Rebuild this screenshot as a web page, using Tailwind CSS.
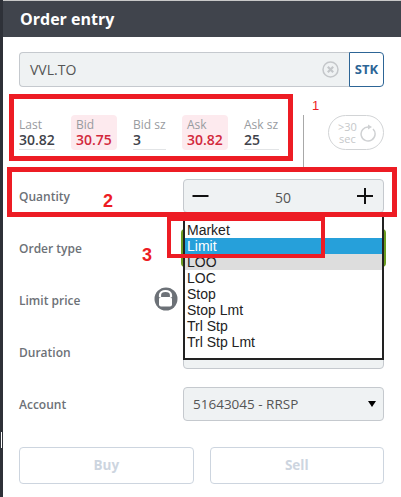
<!DOCTYPE html>
<html lang="en">
<head>
<meta charset="UTF-8">
<title>Order entry</title>
<script src="https://cdn.jsdelivr.net/npm/@tailwindcss/browser@4"></script>
</head>
<body class="bg-white font-['Open_Sans',sans-serif]">
<div class="relative w-[401px] h-[497px] overflow-hidden flex bg-white">
  <!-- left edge of the window behind -->
  <div class="relative w-[3px] shrink-0 bg-[#2e3138]">
    <div class="absolute left-[1px] top-[432px] w-[1px] h-[16px] bg-white"></div>
  </div>

  <div class="flex-1 flex flex-col">
    <div class="h-[1px] bg-[#c8c8c8]"></div>
    <div class="h-[36px] bg-[#40444c] pl-[17px] flex items-center">
      <h1 class="text-[16px] font-bold text-white">Order entry</h1>
    </div>

    <div class="pl-[16px] pr-[17px]">
      <!-- symbol -->
      <div class="flex h-[35px] mt-[15px]">
        <div class="flex-1 flex items-center justify-between bg-[#eff2f3] border border-[#c5c9ce] border-r-0 rounded-l-[4px] pl-[10px] pr-[10px]">
          <span class="text-[14px] text-[#555]">VVL.TO</span>
          <svg width="17" height="17" viewBox="0 0 17 17">
            <circle cx="8.5" cy="8.5" r="7.5" fill="none" stroke="#c4c7ca" stroke-width="1.5"/>
            <path d="M5.8 5.8l5.4 5.4M11.2 5.8l-5.4 5.4" stroke="#c4c7ca" stroke-width="2.2"/>
          </svg>
        </div>
        <div class="w-[35px] flex items-center justify-center border border-[#2d6596] rounded-r-[4px] text-[13px] font-bold text-[#2d6596]">STK</div>
      </div>

      <!-- quotes -->
      <div class="flex mt-[28px] h-[52px]">
        <div class="w-[284px] flex items-start h-[35px]">
          <div class="w-[36px] h-[35px] pt-[2px]">
            <div class="text-[#989ba0] text-[12px] leading-[15px]">Last</div>
            <div class="text-[#3f434a] font-semibold text-[14px] leading-[16px] border-b border-[#e2e4e6] pb-[1px]">30.82</div>
          </div>
          <div class="w-[46px] h-[35px] ml-[16px] pl-[5px] pt-[2px] rounded-[4px] bg-[#fdeaee]">
            <div class="text-[#989ba0] text-[12px] leading-[15px]">Bid</div>
            <div class="text-[#d2283c] font-semibold text-[14px] leading-[16px]">30.75</div>
          </div>
          <div class="w-[33px] h-[35px] ml-[16px] pt-[2px]">
            <div class="text-[#989ba0] text-[12px] leading-[15px] whitespace-nowrap">Bid sz</div>
            <div class="text-[#3f434a] font-semibold text-[14px] leading-[16px] border-b border-[#e2e4e6] pb-[1px]">3</div>
          </div>
          <div class="w-[46px] h-[35px] ml-[16px] pl-[5px] pt-[2px] rounded-[4px] bg-[#fdeaee]">
            <div class="text-[#989ba0] text-[12px] leading-[15px]">Ask</div>
            <div class="text-[#d2283c] font-semibold text-[14px] leading-[16px]">30.82</div>
          </div>
          <div class="w-[35px] h-[35px] ml-[16px] pt-[2px]">
            <div class="text-[#989ba0] text-[12px] leading-[15px] whitespace-nowrap">Ask sz</div>
            <div class="text-[#3f434a] font-semibold text-[14px] leading-[16px] border-b border-[#e2e4e6] pb-[1px]">25</div>
          </div>
        </div>
        <div class="w-[1px] h-[52px] bg-[#a8a8a8]"></div>
        <div class="ml-[24px] w-[56px] h-[35px] rounded-full border border-[#d2d4d6] flex items-center pl-[9px] gap-[3px]">
          <div class="text-[11px] leading-[12px] text-[#c6c8ca] text-center">&gt;30<br>sec</div>
          <svg width="17" height="18" viewBox="0 0 17 18">
            <path d="M13 5a7 7 0 1 1-4.5-2" fill="none" stroke="#cfd1d3" stroke-width="1.5"/>
            <path d="M8 0.5l4 2.5-4 2.5z" fill="#cfd1d3"/>
          </svg>
        </div>
      </div>

      <!-- form rows -->
      <div class="flex flex-col gap-[18px] mt-[12px]">
        <div class="flex items-center h-[34px]">
          <span class="w-[164px] mt-[2px] text-[12px] font-semibold text-[#6d7177]">Quantity</span>
          <div class="flex-1 h-full flex items-center justify-between pl-[8px] pr-[9px] bg-[#eff2f3] border border-[#c5c9ce] rounded-[4px]">
            <svg width="18" height="18" viewBox="0 0 18 18"><path d="M0.5 9h16" stroke="#111" stroke-width="2"/></svg>
            <span class="pt-[3px] text-[14px] text-[#555]">50</span>
            <svg width="18" height="18" viewBox="0 0 18 18"><path d="M1 9h16M9 1v16" stroke="#111" stroke-width="2"/></svg>
          </div>
        </div>
        <div class="flex items-center h-[34px]">
          <span class="w-[164px] mt-[2px] text-[12px] font-semibold text-[#6d7177]">Order type</span>
          <div class="flex-1 h-[38px] -mx-[2px] bg-[#6a9c1f] rounded-[4px]"></div>
        </div>
        <div class="flex items-center h-[34px]">
          <span class="w-[135px] mt-[2px] text-[12px] font-semibold text-[#6d7177]">Limit price</span>
          <svg width="24" height="24" viewBox="0 0 24 24" class="-mt-[2px]">
            <circle cx="12" cy="12" r="11.5" fill="#6c7177"/>
            <path d="M6 10V8a5.5 4 0 0 1 11 0v2" fill="none" stroke="#fff" stroke-width="2.2"/>
            <rect x="5" y="10" width="13" height="9.5" rx="2" fill="#fff"/>
          </svg>
          <div class="flex-1 h-full ml-[5px] bg-[#eff2f3]"></div>
        </div>
        <div class="flex items-center h-[34px]">
          <span class="w-[164px] mt-[2px] text-[12px] font-semibold text-[#6d7177]">Duration</span>
          <div class="flex-1 h-full bg-[#eff2f3] border border-[#c5c9ce] rounded-[4px]"></div>
        </div>
        <div class="flex items-center h-[34px]">
          <span class="w-[164px] mt-[2px] text-[12px] font-semibold text-[#6d7177]">Account</span>
          <div class="flex-1 h-full flex items-center justify-between pl-[9px] pr-[7px] bg-[#eff2f3] border border-[#c5c9ce] rounded-[4px]">
            <span class="text-[13.5px] text-[#555]">51643045 - RRSP</span>
            <span class="w-0 h-0 border-x-[4px] border-x-transparent border-t-[6px] border-t-black"></span>
          </div>
        </div>
      </div>

      <!-- buttons -->
      <div class="flex gap-[16px] mt-[26px]">
        <button class="flex-1 h-[37px] border border-[#cdd5df] rounded-[4px] text-[13.5px] font-bold text-[#cdd5df]">Buy</button>
        <button class="flex-1 h-[37px] border border-[#cdd5df] rounded-[4px] text-[13.5px] font-bold text-[#cdd5df]">Sell</button>
      </div>
    </div>
  </div>

  <!-- open order type list -->
  <ul class="absolute left-[183px] top-[216px] w-[201px] h-[144px] bg-white border-x-2 border-b-2 border-[#222] pt-[6px] font-['Liberation_Sans',sans-serif] text-[14px] leading-[16px] text-[#222]">
    <li class="pl-[2px]">Market</li>
    <li class="pl-[2px] bg-[#26a0da] text-white">Limit</li>
    <li class="pl-[2px] bg-[#dddddd]">LOO</li>
    <li class="pl-[2px]">LOC</li>
    <li class="pl-[2px]">Stop</li>
    <li class="pl-[2px]">Stop Lmt</li>
    <li class="pl-[2px]">Trl Stp</li>
    <li class="pl-[2px]">Trl Stp Lmt</li>
  </ul>

  <!-- red annotations drawn over the shot -->
  <div class="absolute left-[9px] top-[94px] w-[284px] h-[67px] border-[5px] border-[#ed1c24]"></div>
  <div class="absolute left-[7px] top-[167px] w-[390px] h-[50px] border-[5px] border-[#ed1c24]"></div>
  <div class="absolute left-[167px] top-[217px] w-[158px] h-[41px] border-[4px] border-[#ed1c24]"></div>
  <span class="absolute left-[312px] top-[99px] text-[13px] leading-[14px] text-[#ed1c24] font-['Liberation_Sans',sans-serif]">1</span>
  <span class="absolute left-[103px] top-[190px] text-[18px] leading-[22px] font-bold text-[#ed1c24] font-['Liberation_Sans',sans-serif]">2</span>
  <span class="absolute left-[142px] top-[244px] text-[18px] leading-[22px] font-bold text-[#ed1c24] font-['Liberation_Sans',sans-serif]">3</span>
</div>
</body>
</html>
